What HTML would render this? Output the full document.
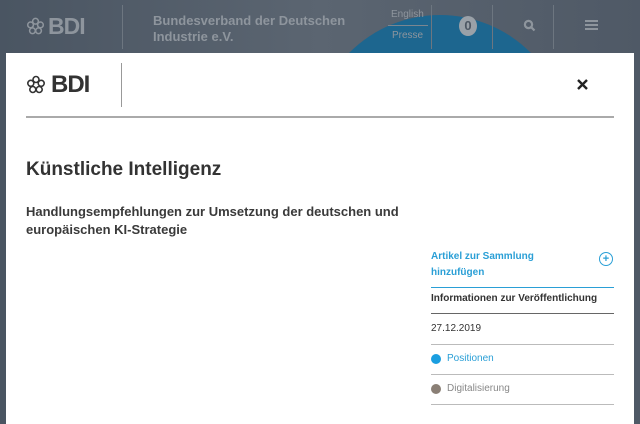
<!DOCTYPE html>
<html><head><style>
*{margin:0;padding:0;box-sizing:border-box}
body{width:640px;height:424px;overflow:hidden;position:relative;font-family:"Liberation Sans",sans-serif;background:#56606c}
.bg{position:absolute;inset:0;background:linear-gradient(90deg,#4a5562,#5b6571 50%,#4f5966)}
.circle{position:absolute;left:312px;top:15px;width:256px;height:256px;border-radius:50%;background:#1d668f}
.hd{position:absolute;color:#8e959d;font-weight:bold}
.vl{position:absolute;top:5px;height:44px;width:1px;background:#6d7680}
.modal{position:absolute;left:6px;top:53px;width:628px;height:371px;background:#fff}
.t{position:absolute;color:#333}
.line{position:absolute;height:1px;background:#bbb}
</style></head><body>
<div class="bg"></div>
<div class="circle"></div>
<svg style="position:absolute;left:26px;top:17px" width="19" height="19" viewBox="0 0 20 20" fill="none" stroke="#8e959d" stroke-width="1.6"><circle cx="10" cy="4.5" r="3"/><circle cx="15.2" cy="8.3" r="3"/><circle cx="13.2" cy="14.5" r="3"/><circle cx="6.8" cy="14.5" r="3"/><circle cx="4.8" cy="8.3" r="3"/></svg>
<div class="hd" style="left:48px;top:13px;font-size:23px;letter-spacing:-1px">BDI</div>
<div class="vl" style="left:122px"></div>
<div class="hd" style="left:153px;top:13px;font-size:13px;line-height:16px">Bundesverband der Deutschen<br>Industrie e.V.</div>
<div class="hd" style="left:391px;top:9px;font-size:10px;font-weight:normal">English</div>
<div style="position:absolute;left:388px;top:25px;width:40px;height:1px;background:#7b8690"></div>
<div class="hd" style="left:392px;top:30px;font-size:10px;font-weight:normal">Presse</div>
<div class="vl" style="left:431px"></div>
<div style="position:absolute;left:459px;top:16px;width:18px;height:20px;border-radius:50%;background:#9aa1a8;color:#4d5763;font-weight:bold;font-size:13px;text-align:center;line-height:20px">0</div>
<div class="vl" style="left:492px"></div>
<svg style="position:absolute;left:523px;top:19px" width="13" height="13" viewBox="0 0 13 13" fill="none" stroke="#8e959d" stroke-width="2.2"><circle cx="5.5" cy="5.5" r="3.6"/><path d="M8 8l3.5 3.5"/></svg>
<div class="vl" style="left:553px"></div>
<div style="position:absolute;left:585px;top:20px;width:13px;height:10px;border-top:2px solid #8e959d;border-bottom:2px solid #8e959d"></div>
<div style="position:absolute;left:585px;top:24px;width:13px;height:2px;background:#8e959d"></div>
<div class="modal">
<svg style="position:absolute;left:20px;top:22px" width="20" height="20" viewBox="0 0 20 20" fill="none" stroke="#333" stroke-width="1.6"><circle cx="10" cy="4.5" r="3"/><circle cx="15.2" cy="8.3" r="3"/><circle cx="13.2" cy="14.5" r="3"/><circle cx="6.8" cy="14.5" r="3"/><circle cx="4.8" cy="8.3" r="3"/></svg>
<div class="t" style="left:45px;top:18px;font-size:24px;font-weight:bold;letter-spacing:-1px">BDI</div>
<div style="position:absolute;left:115px;top:10px;width:1px;height:44px;background:#999"></div>
<svg style="position:absolute;left:571px;top:26px" width="11" height="11" viewBox="0 0 11 11" stroke="#222" stroke-width="2.4"><path d="M1 1L10 10M10 1L1 10"/></svg>
<div style="position:absolute;left:20px;top:63px;width:588px;height:2px;background:#aaa"></div>
<div class="t" style="left:20px;top:106px;font-size:19px;font-weight:bold;color:#333">Künstliche Intelligenz</div>
<div class="t" style="left:20px;top:150px;font-size:13px;font-weight:bold;line-height:18px;color:#3a3a3a">Handlungsempfehlungen zur Umsetzung der deutschen und<br>europäischen KI-Strategie</div>
<div class="t" style="left:425px;top:196px;font-size:10px;font-weight:bold;line-height:16px;color:#2a9fd6">Artikel zur Sammlung<br>hinzufügen</div>
<div style="position:absolute;left:593px;top:199px;width:14px;height:14px;border:1px solid #2a9fd6;border-radius:50%;color:#2a9fd6;font-size:11px;font-weight:bold;text-align:center;line-height:12px">+</div>
<div style="position:absolute;left:425px;top:234px;width:183px;height:1px;background:#2a9fd6"></div>
<div class="t" style="left:425px;top:240px;font-size:10px;font-weight:bold">Informationen zur Veröffentlichung</div>
<div style="position:absolute;left:425px;top:260px;width:183px;height:1px;background:#666"></div>
<div class="t" style="left:425px;top:270px;font-size:10px">27.12.2019</div>
<div class="line" style="left:425px;top:291px;width:183px"></div>
<div style="position:absolute;left:425px;top:301px;width:10px;height:10px;border-radius:50%;background:#1a9ee0"></div>
<div class="t" style="left:441px;top:300px;font-size:10px;color:#2a9fd6">Positionen</div>
<div class="line" style="left:425px;top:321px;width:183px"></div>
<div style="position:absolute;left:425px;top:331px;width:10px;height:10px;border-radius:50%;background:#8a7f75"></div>
<div class="t" style="left:441px;top:330px;font-size:10px;color:#888">Digitalisierung</div>
<div class="line" style="left:425px;top:351px;width:183px"></div>
</div>
</body></html>
